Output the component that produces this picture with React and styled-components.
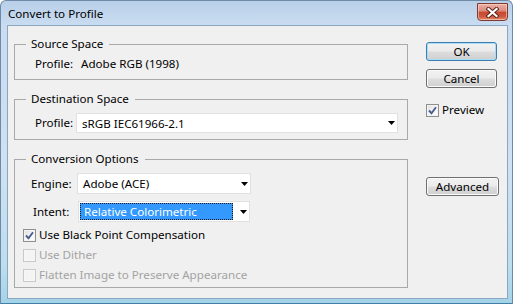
import React from 'react';
import styled, { createGlobalStyle } from 'styled-components';

const FONT = `"Noto Sans", "Open Sans", sans-serif`;
const SIZE = '11.6px';

const GlobalStyle = createGlobalStyle`
  html, body { margin: 0; padding: 0; background: #ffffff; }
  body { font-family: ${FONT}; font-size: ${SIZE}; }
  * { box-sizing: border-box; }
`;

const Window = styled.div`
  width: 513px;
  height: 304px;
  display: flex;
  flex-direction: column;
  border: 1px solid #6f8aa6;
  border-bottom-color: #3f7fa8;
  border-radius: 6px 6px 0 0;
  padding: 0 4px 4px 6px;
  background: linear-gradient(to bottom, #b9d0e9 0px, #c9dcf0 24px, #cfe1f2 55%, #bcdeee 88%, #a3d3e8 100%);
  font-family: ${FONT};
  font-size: ${SIZE};
  color: #000;
`;

const TitleBar = styled.div`
  height: 24px;
  display: flex;
  align-items: flex-start;
  justify-content: space-between;
  padding-left: 1px;
`;

const Title = styled.div`
  margin-top: 5px;
  line-height: 16px;
  color: #000;
`;

const CloseButton = styled.div`
  width: 31px;
  height: 18px;
  margin-top: 2px;
  border: 1px solid #7b3b30;
  border-radius: 0 0 4px 4px;
  display: flex;
  align-items: center;
  justify-content: center;
  background: linear-gradient(to bottom, #eab1a6 0%, #d98a79 45%, #c7452e 50%, #cf5a40 80%, #e08d6f 100%);
  box-shadow: inset 0 0 0 1px rgba(255, 220, 210, 0.55);
`;

const Body = styled.div`
  flex: 1;
  display: flex;
  align-items: flex-start;
  background: #f0f0f0;
  border: 1px solid #8aa6c2;
  padding: 10px 0 0 6px;
`;

const LeftColumn = styled.div`
  width: 394px;
  display: flex;
  flex-direction: column;
  gap: 11px;
`;

const RightColumn = styled.div`
  margin-left: 18px;
  margin-top: 6px;
  display: flex;
  flex-direction: column;
  align-items: flex-start;
`;

const Group = styled.fieldset`
  margin: 0;
  min-width: 0;
  padding: ${p => p.$pad};
  border: 1px solid #a9a9a9;
  display: flex;
  flex-direction: column;
`;

const Legend = styled.legend`
  margin-left: 3px;
  padding: 0 6px 0 5px;
  line-height: 16px;
  height: 16px;
  color: #000;
`;

const Row = styled.div`
  display: flex;
  align-items: center;
  height: ${p => p.$h}px;
  margin-top: ${p => p.$mt || 0}px;
  padding-left: ${p => p.$indent || 0}px;
`;

const Label = styled.span`
  width: ${p => p.$w}px;
  flex: none;
  line-height: 16px;
  white-space: nowrap;
`;

const Value = styled.span`
  line-height: 16px;
  white-space: nowrap;
`;

const Select = styled.div`
  width: ${p => p.$w}px;
  height: 100%;
  display: flex;
  align-items: stretch;
  background: #ffffff;
  border: 1px solid #e1e1e1;
`;

const SelectText = styled.div`
  flex: 1;
  display: flex;
  align-items: center;
  white-space: nowrap;
  ${p => p.$highlight ? `
    margin: 1px 4px 1px 1px;
    padding-left: 4px;
    background: #3399ff;
    color: #ffffff;
    outline: 1px dotted #1a1a1a;
    outline-offset: -1px;
  ` : `
    padding-left: 5px;
    color: #000;
  `}
`;

const ArrowBox = styled.div`
  width: 12px;
  flex: none;
  display: flex;
  align-items: center;
  justify-content: center;
`;

const CheckRow = styled.div`
  display: flex;
  align-items: center;
  gap: 3px;
  height: ${p => p.$h || 20}px;
  margin-top: ${p => p.$mt || 0}px;
  color: ${p => p.$disabled ? '#a3a3a3' : '#000'};
  white-space: nowrap;
  line-height: 16px;
`;

const Box = styled.span`
  width: 13px;
  height: 13px;
  flex: none;
  display: flex;
  align-items: center;
  justify-content: center;
  border: 1px solid ${p => p.$disabled ? '#c9c9c9' : '#8e8f8f'};
  background: ${p => p.$disabled
    ? '#f4f4f4'
    : 'linear-gradient(135deg, #dcdcdc 0%, #f6f6f6 55%, #ffffff 100%)'};
  box-shadow: inset 0 0 0 1px ${p => p.$disabled ? '#f7f7f7' : '#f4f4f4'};
`;

const Button = styled.button`
  width: ${p => p.$w}px;
  height: 19px;
  margin-top: ${p => p.$mt || 0}px;
  padding: 0;
  font-family: ${FONT};
  font-size: ${SIZE};
  line-height: 16px;
  color: #000;
  border: 1px solid ${p => p.$default ? '#3c7fb1' : '#707070'};
  border-radius: 3px;
  background: linear-gradient(to bottom, #f2f2f2 0%, #ebebeb 48%, #dddddd 52%, #cfcfcf 100%);
  box-shadow: inset 0 0 0 1px ${p => p.$default ? '#a9dcf6' : '#fbfbfb'};
`;

const Arrow = () => (
  <svg width="7" height="4" viewBox="0 0 7 4">
    <polygon points="0,0 7,0 3.5,4" fill="#000" />
  </svg>
);

const CheckMark = () => (
  <svg width="9" height="9" viewBox="0 0 9 9">
    <path d="M1 4.5 L3.5 7.2 L8 1.2" fill="none" stroke="#4a5e8f" strokeWidth="1.9" />
  </svg>
);

const CloseGlyph = () => (
  <svg width="13" height="11" viewBox="0 0 13 11">
    <path d="M2.5 2 L10.5 9 M10.5 2 L2.5 9" stroke="#5a2218" strokeWidth="4" strokeLinecap="square" />
    <path d="M2.5 2 L10.5 9 M10.5 2 L2.5 9" stroke="#ffffff" strokeWidth="2.2" strokeLinecap="square" />
  </svg>
);

const Checkbox = ({ checked, disabled, label, h, mt }) => (
  <CheckRow $disabled={disabled} $h={h} $mt={mt}>
    <Box $disabled={disabled}>{checked && <CheckMark />}</Box>
    <span>{label}</span>
  </CheckRow>
);

const Dropdown = ({ w, value, highlight }) => (
  <Select $w={w}>
    <SelectText $highlight={highlight}>{value}</SelectText>
    <ArrowBox><Arrow /></ArrowBox>
  </Select>
);

export default function App() {
  return (
    <>
      <GlobalStyle />
      <Window>
        <TitleBar>
          <Title>Convert to Profile</Title>
          <CloseButton><CloseGlyph /></CloseButton>
        </TitleBar>
        <Body>
          <LeftColumn>
            <Group $pad="4px 8px 7px">
              <Legend>Source Space</Legend>
              <Row $h={16} $indent={12}>
                <Label $w={46}>Profile:</Label>
                <Value>Adobe RGB (1998)</Value>
              </Row>
            </Group>
            <Group $pad="6px 8px 6px">
              <Legend>Destination Space</Legend>
              <Row $h={20} $indent={12}>
                <Label $w={41}>Profile:</Label>
                <Dropdown w={322} value="sRGB IEC61966-2.1" />
              </Row>
            </Group>
            <Group $pad="6px 8px 2px">
              <Legend>Conversion Options</Legend>
              <Row $h={21} $indent={8}>
                <Label $w={46}>Engine:</Label>
                <Dropdown w={174} value="Adobe (ACE)" />
              </Row>
              <Row $h={21} $mt={7} $indent={10}>
                <Label $w={45}>Intent:</Label>
                <Dropdown w={172} value="Relative Colorimetric" highlight />
              </Row>
              <Checkbox checked label="Use Black Point Compensation" mt={3} />
              <Checkbox disabled label="Use Dither" />
              <Checkbox disabled label="Flatten Image to Preserve Appearance" />
            </Group>
          </LeftColumn>
          <RightColumn>
            <Button $w={71} $default>OK</Button>
            <Button $w={71} $mt={8}>Cancel</Button>
            <Checkbox checked label="Preview" h={16} mt={14} />
            <Button $w={73} $mt={59}>Advanced</Button>
          </RightColumn>
        </Body>
      </Window>
    </>
  );
}
